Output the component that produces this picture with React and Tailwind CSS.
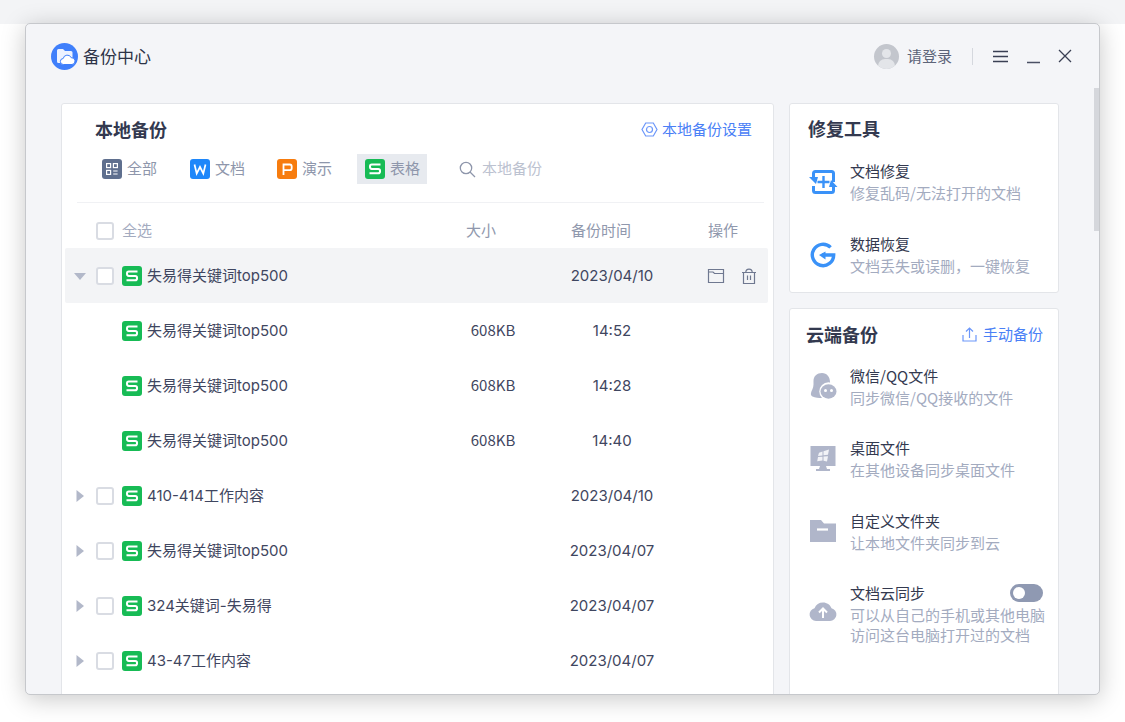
const CJK = "font-['Noto_Sans_CJK_SC','Noto_Sans',sans-serif]";
const LATIN = "font-['Inter','Noto_Sans_CJK_SC',sans-serif]";

function Logo() {
  return (
    <svg width="27" height="27" viewBox="0 0 27 27">
      <circle cx="13.5" cy="13.5" r="13.5" fill="#3f7ffb" />
      <path d="M6 7.500A1.500 1.500 0 0 1 7.500 6h4.500l2 2h6a1.500 1.500 0 0 1 1.500 1.500V20H7.500A1.500 1.500 0 0 1 6 18.500Z" fill="#fff" opacity="0.9" />
      <path d="M12.500 21.500a3 3 0 0 1-.3-6 4.200 4.200 0 0 1 8-.8 3.400 3.400 0 0 1 .8 6.800Z" fill="#fff" stroke="#3f7ffb" strokeWidth="1" />
    </svg>
  );
}

function AppIcon({ color, children }) {
  return (
    <svg width="20" height="20" viewBox="0 0 20 20" className="shrink-0">
      <rect width="20" height="20" rx="3" fill={color} />
      {children}
    </svg>
  );
}

const SheetIcon = () => (
  <AppIcon color="#17bb55">
    <path d="M15.500 5.500H6.800a1.800 1.800 0 0 0-1.800 1.800v.8a1.800 1.800 0 0 0 1.800 1.800h6.400a1.800 1.800 0 0 1 1.800 1.800v.7a1.800 1.800 0 0 1-1.800 1.800H4.500" fill="none" stroke="#fff" strokeWidth="2" />
  </AppIcon>
);

const AllIcon = () => (
  <AppIcon color="#5f6f8e">
    <g fill="none" stroke="#fff" strokeWidth="1.200">
      <rect x="4.600" y="4.600" width="4" height="4" />
      <rect x="11.400" y="4.600" width="4" height="4" />
      <rect x="4.600" y="11.400" width="4" height="4" />
      <path d="M11.200 12h4.400M11.200 15h4.400" />
    </g>
  </AppIcon>
);

const WordIcon = () => (
  <AppIcon color="#1e87fa">
    <path d="M4.500 5.500 6.700 14.500 10 8l3.300 6.500 2.200-9" fill="none" stroke="#fff" strokeWidth="1.700" />
  </AppIcon>
);

const SlideIcon = () => (
  <AppIcon color="#f77c0e">
    <path d="M6.500 16V5.500h6.200a2 2 0 0 1 2 2v1.700a2 2 0 0 1-2 2H6.500" fill="none" stroke="#fff" strokeWidth="1.800" />
  </AppIcon>
);

function Checkbox() {
  return <span className="block w-[18px] h-[18px] shrink-0 rounded-[3px] border-2 border-[#d9dce3] bg-white" />;
}

function Caret({ open }) {
  return (
    <svg width="14" height="14" viewBox="0 0 14 14" className="shrink-0">
      {open ? <path d="M1 4h12l-6 7Z" fill="#b2b8c9" /> : <path d="M3.500 1v12l7.500-6Z" fill="#b2b8c9" />}
    </svg>
  );
}

const groups = [
  { name: "失易得关键词top500", date: "2023/04/10", open: true },
  { name: "", sub: true, size: "608KB", date: "14:52" },
  { name: "", sub: true, size: "608KB", date: "14:28" },
  { name: "", sub: true, size: "608KB", date: "14:40" },
  { name: "410-414工作内容", date: "2023/04/10" },
  { name: "失易得关键词top500", date: "2023/04/07" },
  { name: "324关键词-失易得", date: "2023/04/07" },
  { name: "43-47工作内容", date: "2023/04/07" },
];

function Row({ row }) {
  return (
    <div className={`flex items-center h-[55px] rounded-[2px] ${row.open ? "bg-[#f3f4f6]" : ""}`}>
      <div className="w-[31px] pl-2 shrink-0">{!row.sub && <Caret open={row.open} />}</div>
      <div className="w-[26px] shrink-0">{!row.sub && <Checkbox />}</div>
      <SheetIcon />
      <span className={`ml-[5px] pt-px w-[320px] shrink-0 text-[15px] text-[#3f4660] whitespace-nowrap ${LATIN}`}>
        {row.name || "失易得关键词top500"}
      </span>
      <span className="w-[50px] text-center text-[15px] text-[#3f4660] ml-[1px]">{row.size}</span>
      <span className={`w-[120px] ml-[34px] pt-px text-center text-[15px] text-[#3f4660] ${LATIN}`}>{row.date}</span>
      {row.open && (
        <div className="flex items-center gap-[15px] ml-[35px]">
          <svg width="18" height="18" viewBox="0 0 18 18" fill="none" stroke="#6f7890" strokeWidth="1.200">
            <path d="M1.500 2.500h15v13h-15Z" />
            <path d="M1.500 5h4.500l1.500 1.500h9" />
          </svg>
          <svg width="18" height="18" viewBox="0 0 18 18" fill="none" stroke="#6f7890" strokeWidth="1.200">
            <path d="M2 5.500h14M3.500 5.500V16.500h11V5.500M5.800 5.500C5.800 1 12.200 1 12.200 5.500M7.500 8.500v4.500M10.500 8.500v4.500" />
          </svg>
        </div>
      )}
    </div>
  );
}

function RepairIcon() {
  return (
    <svg width="30" height="30" viewBox="0 0 30 30">
      <path d="M5.500 11V6.500a2 2 0 0 1 2-2h16a2 2 0 0 1 2 2V15M25.500 19v4.500a2 2 0 0 1-2 2h-16a2 2 0 0 1-2-2V19" fill="none" stroke="#3a92f8" strokeWidth="3" />
      <path d="M1 10h9l-2 7ZM21 20h8.500l-6.500-7Z" fill="#3a92f8" />
      <path d="M15.500 9v12M9.500 15h12" stroke="#3a92f8" strokeWidth="2.400" />
    </svg>
  );
}

function RecoverIcon() {
  return (
    <svg width="30" height="30" viewBox="0 0 30 30" fill="none">
      <path d="M22.600 7.400A10.700 10.700 0 1 0 25.700 15H14" stroke="#3a92f8" strokeWidth="3.400" />
      <path d="M11 15l6.500-3.500v8Z" fill="#3a92f8" />
    </svg>
  );
}

function QQIcon() {
  return (
    <svg width="30" height="30" viewBox="0 0 30 30">
      <path d="M14 2c5 0 8 4 8 9 0 4 2 5 2 9 0 5-4 7-10 7-3 0-7 0-9.500-1.500-1-.6-2-1.500-1.500-3.500.5-2.500 2.500-5 2.500-8.500V10c0-5 3.500-8 8.500-8Z" fill="#b0b6ca" />
      <circle cx="20.500" cy="20.500" r="9.200" fill="#fff" />
      <ellipse cx="20.500" cy="20.500" rx="8" ry="7.200" fill="#b0b6ca" />
      <circle cx="17.500" cy="19.500" r="1.500" fill="#fff" />
      <circle cx="23.500" cy="19.500" r="1.500" fill="#fff" />
    </svg>
  );
}

function DesktopIcon() {
  return (
    <svg width="30" height="30" viewBox="0 0 30 30">
      <path d="M2.500 2h25v20h-25ZM12 22h6l1 3h3v2H8v-2h3Z" fill="#b0b6ca" />
      <path d="M11 8.800l3.500-1.300v4l-4.500.5ZM15.500 7.200l5.500-1.700-1 5.300-4.500.5ZM10 13l4.500-.3v3.800l-5.300.8ZM15.500 12.600l4.500-.4-1 5.300-3.500-.8Z" fill="#f2f3f7" />
    </svg>
  );
}

function FolderIcon() {
  return (
    <svg width="30" height="30" viewBox="0 0 30 30">
      <path d="M2 4h11l3 3.500h12V26H2Z" fill="#b0b6ca" />
      <path d="M9 13.500h11" stroke="#fff" strokeWidth="2.200" />
    </svg>
  );
}

function CloudIcon() {
  return (
    <svg width="30" height="30" viewBox="0 0 30 30">
      <path d="M8 24a6.500 6.500 0 0 1-1.500-12.800C8 7.500 11 5.500 15 5.500s7 2.200 8.500 5.700A6.500 6.500 0 0 1 22 24Z" fill="#b0b6ca" />
      <path d="M15 21v-9M11 15.500l4-4 4 4" fill="none" stroke="#fff" strokeWidth="2" />
    </svg>
  );
}

function ToolItem({ icon, title, desc, rowClass, iconClass = "", toggle }) {
  return (
    <div className={`relative flex items-center gap-[12px] ${rowClass}`}>
      <div className={`w-[30px] shrink-0 ${iconClass}`}>{icon}</div>
      <div className="min-w-0 leading-[22px]">
        <p className="text-[15px] text-[#33394f] whitespace-nowrap">{title}</p>
        <div className="mt-[1px] text-[15px] leading-[20px] text-[#a3abbf] whitespace-nowrap">
          {desc.map((line) => (
            <p key={line}>{line}</p>
          ))}
        </div>
      </div>
      {toggle && (
        <span className="absolute right-[15px] top-[2px] flex items-center w-[33px] h-[18px] rounded-full bg-[#8f99b2] pl-[3px]">
          <span className="block w-[12px] h-[12px] rounded-full bg-white" />
        </span>
      )}
    </div>
  );
}

function Tab({ icon, label, className }) {
  return (
    <span className={`flex items-center gap-[5px] ${className}`}>
      {icon}
      <span className="-mt-[2px]">{label}</span>
    </span>
  );
}

export default function App() {
  return (
    <div className={`h-[722px] w-[1125px] overflow-hidden bg-white ${CJK}`}>
      <div className="h-[24px] bg-[#f3f4f6]" />
      <div className="-mt-px ml-[25px] w-[1075px] h-[672px] overflow-hidden relative rounded-[5px] border border-[#c6c8cc] bg-[#f4f5f8] shadow-[0_4px_24px_rgba(0,0,0,0.22)]">
        <header className="flex items-center h-[64px] pl-[25px] pr-[27px]">
          <Logo />
          <span className="ml-[5px] text-[17px] text-[#2d3347]">备份中心</span>
          <div className="ml-auto flex items-center">
            <span className="relative block w-[25px] h-[25px] rounded-full bg-[#c3c6cd] overflow-hidden">
              <span className="absolute left-[8px] top-[5px] w-[9px] h-[9px] rounded-full bg-[#e3e5e9]" />
              <span className="absolute left-[4px] top-[15px] w-[17px] h-[14px] rounded-full bg-[#e3e5e9]" />
            </span>
            <span className="ml-[8px] text-[15px] text-[#5d6478]">请登录</span>
            <span className="ml-[20px] w-px h-[17px] bg-[#d5d8de]" />
            <svg width="15" height="13" viewBox="0 0 15 13" className="ml-[20px]" stroke="#3a4054" strokeWidth="1.300">
              <path d="M0 1.500h15M0 6.500h15M0 11.500h15" />
            </svg>
            <svg width="13" height="15" viewBox="0 0 13 15" className="ml-[19px]" stroke="#4a5064" strokeWidth="1.400">
              <path d="M0 13.500h13" />
            </svg>
            <svg width="14" height="14" viewBox="0 0 14 14" className="ml-[18px]" stroke="#3a4054" strokeWidth="1.300">
              <path d="M1 1l12 12M13 1 1 13" />
            </svg>
          </div>
        </header>

        <span className="absolute right-0 top-[64px] w-[5px] h-[143px] bg-[#d5d7dc]" />

        <div className="flex items-start pl-[35px] pt-[15px] gap-[15px]">
          <section className="w-[713px] h-[640px] shrink-0 rounded-[3px] border border-[#e3e5e9] bg-white pl-[3px]">
            <div className="flex items-center justify-between h-[50px] pl-[30px] pr-[21px]">
              <h2 className="text-[18px] font-bold leading-none text-[#33394f]">本地备份</h2>
              <a className="flex items-center gap-[4px] text-[15px] text-[#4a80f6]">
                <svg width="17" height="17" viewBox="0 0 17 17" fill="none" stroke="#6c97fa" strokeWidth="1.200">
                  <path d="M4.700 2h7.600l3.700 6.500-3.700 6.500H4.700L1 8.500Z" />
                  <circle cx="8.500" cy="8.500" r="3" />
                </svg>
                本地备份设置
              </a>
            </div>

            <div className="flex items-center h-[30px] pl-[37px] text-[15px] text-[#8e96ab]">
              <Tab icon={<AllIcon />} label="全部" className="w-[88px]" />
              <Tab icon={<WordIcon />} label="文档" className="w-[87px]" />
              <Tab icon={<SlideIcon />} label="演示" className="w-[80px]" />
              <Tab icon={<SheetIcon />} label="表格" className="h-[30px] w-[70px] bg-[#e7eaef] pl-[8px]" />
              <span className="flex items-center gap-[6px] ml-[32px] text-[#bcc2d0]">
                <svg width="17" height="17" viewBox="0 0 17 17" fill="none" stroke="#8e96ab" strokeWidth="1.300">
                  <circle cx="7" cy="7" r="5.700" />
                  <path d="M11 11l5 5" />
                </svg>
                <span className="-mt-[2px]">本地备份</span>
              </span>
            </div>

            <div className="ml-[12px] mr-[9px] mt-[18px] border-t border-[#f0f1f4]" />

            <div className="flex items-center h-[45px] pt-[10px] pl-[31px] text-[15px] text-[#9098ad]">
              <Checkbox />
              <span className="ml-[8px] w-[344px] text-[#a3abbf]">全选</span>
              <span className="w-[105px]">大小</span>
              <span className="w-[137px]">备份时间</span>
              <span>操作</span>
            </div>

            <div className="mr-[5px]">
              {groups.map((row, i) => (
                <Row key={i} row={row} />
              ))}
            </div>
          </section>

          <aside className="w-[270px] shrink-0">
            <section className="h-[190px] rounded-[3px] border border-[#e3e5e9] bg-white pl-[18px]">
              <h2 className="pt-[14px] text-[18px] font-bold leading-[20px] text-[#33394f]">修复工具</h2>
              <div className="mt-[22px]">
                <ToolItem icon={<RepairIcon />} title="文档修复" desc={["修复乱码/无法打开的文档"]} rowClass="mb-[30px]" />
                <ToolItem icon={<RecoverIcon />} title="数据恢复" desc={["文档丢失或误删，一键恢复"]} />
              </div>
            </section>

            <section className="mt-[15px] h-[400px] rounded-[3px] border border-[#e3e5e9] bg-white pl-[18px]">
              <div className="flex items-center justify-between pt-[14px] pr-[15px] -ml-[2px]">
                <h2 className="text-[18px] font-bold leading-[22px] text-[#33394f]">云端备份</h2>
                <a className="flex items-center gap-[6px] text-[15px] text-[#4a80f6]">
                  <svg width="15" height="15" viewBox="0 0 15 15" fill="none" stroke="#6c97fa" strokeWidth="1.200">
                    <path d="M1 8v6h13V8M7.500 11V1M4 4.500l3.500-3.500 3.500 3.500" />
                  </svg>
                  手动备份
                </a>
              </div>
              <div className="mt-[19px]">
                <ToolItem icon={<QQIcon />} title="微信/QQ文件" desc={["同步微信/QQ接收的文件"]} rowClass="mb-[29.500px]" />
                <ToolItem icon={<DesktopIcon />} title="桌面文件" desc={["在其他设备同步桌面文件"]} rowClass="mb-[29.500px]" />
                <ToolItem icon={<FolderIcon />} title="自定义文件夹" desc={["让本地文件夹同步到云"]} rowClass="mb-[29.500px]" />
                <ToolItem icon={<CloudIcon />} title="文档云同步" desc={["可以从自己的手机或其他电脑", "访问这台电脑打开过的文档"]} iconClass="mb-[3px]" toggle />
              </div>
            </section>
          </aside>
        </div>
      </div>
    </div>
  );
}
